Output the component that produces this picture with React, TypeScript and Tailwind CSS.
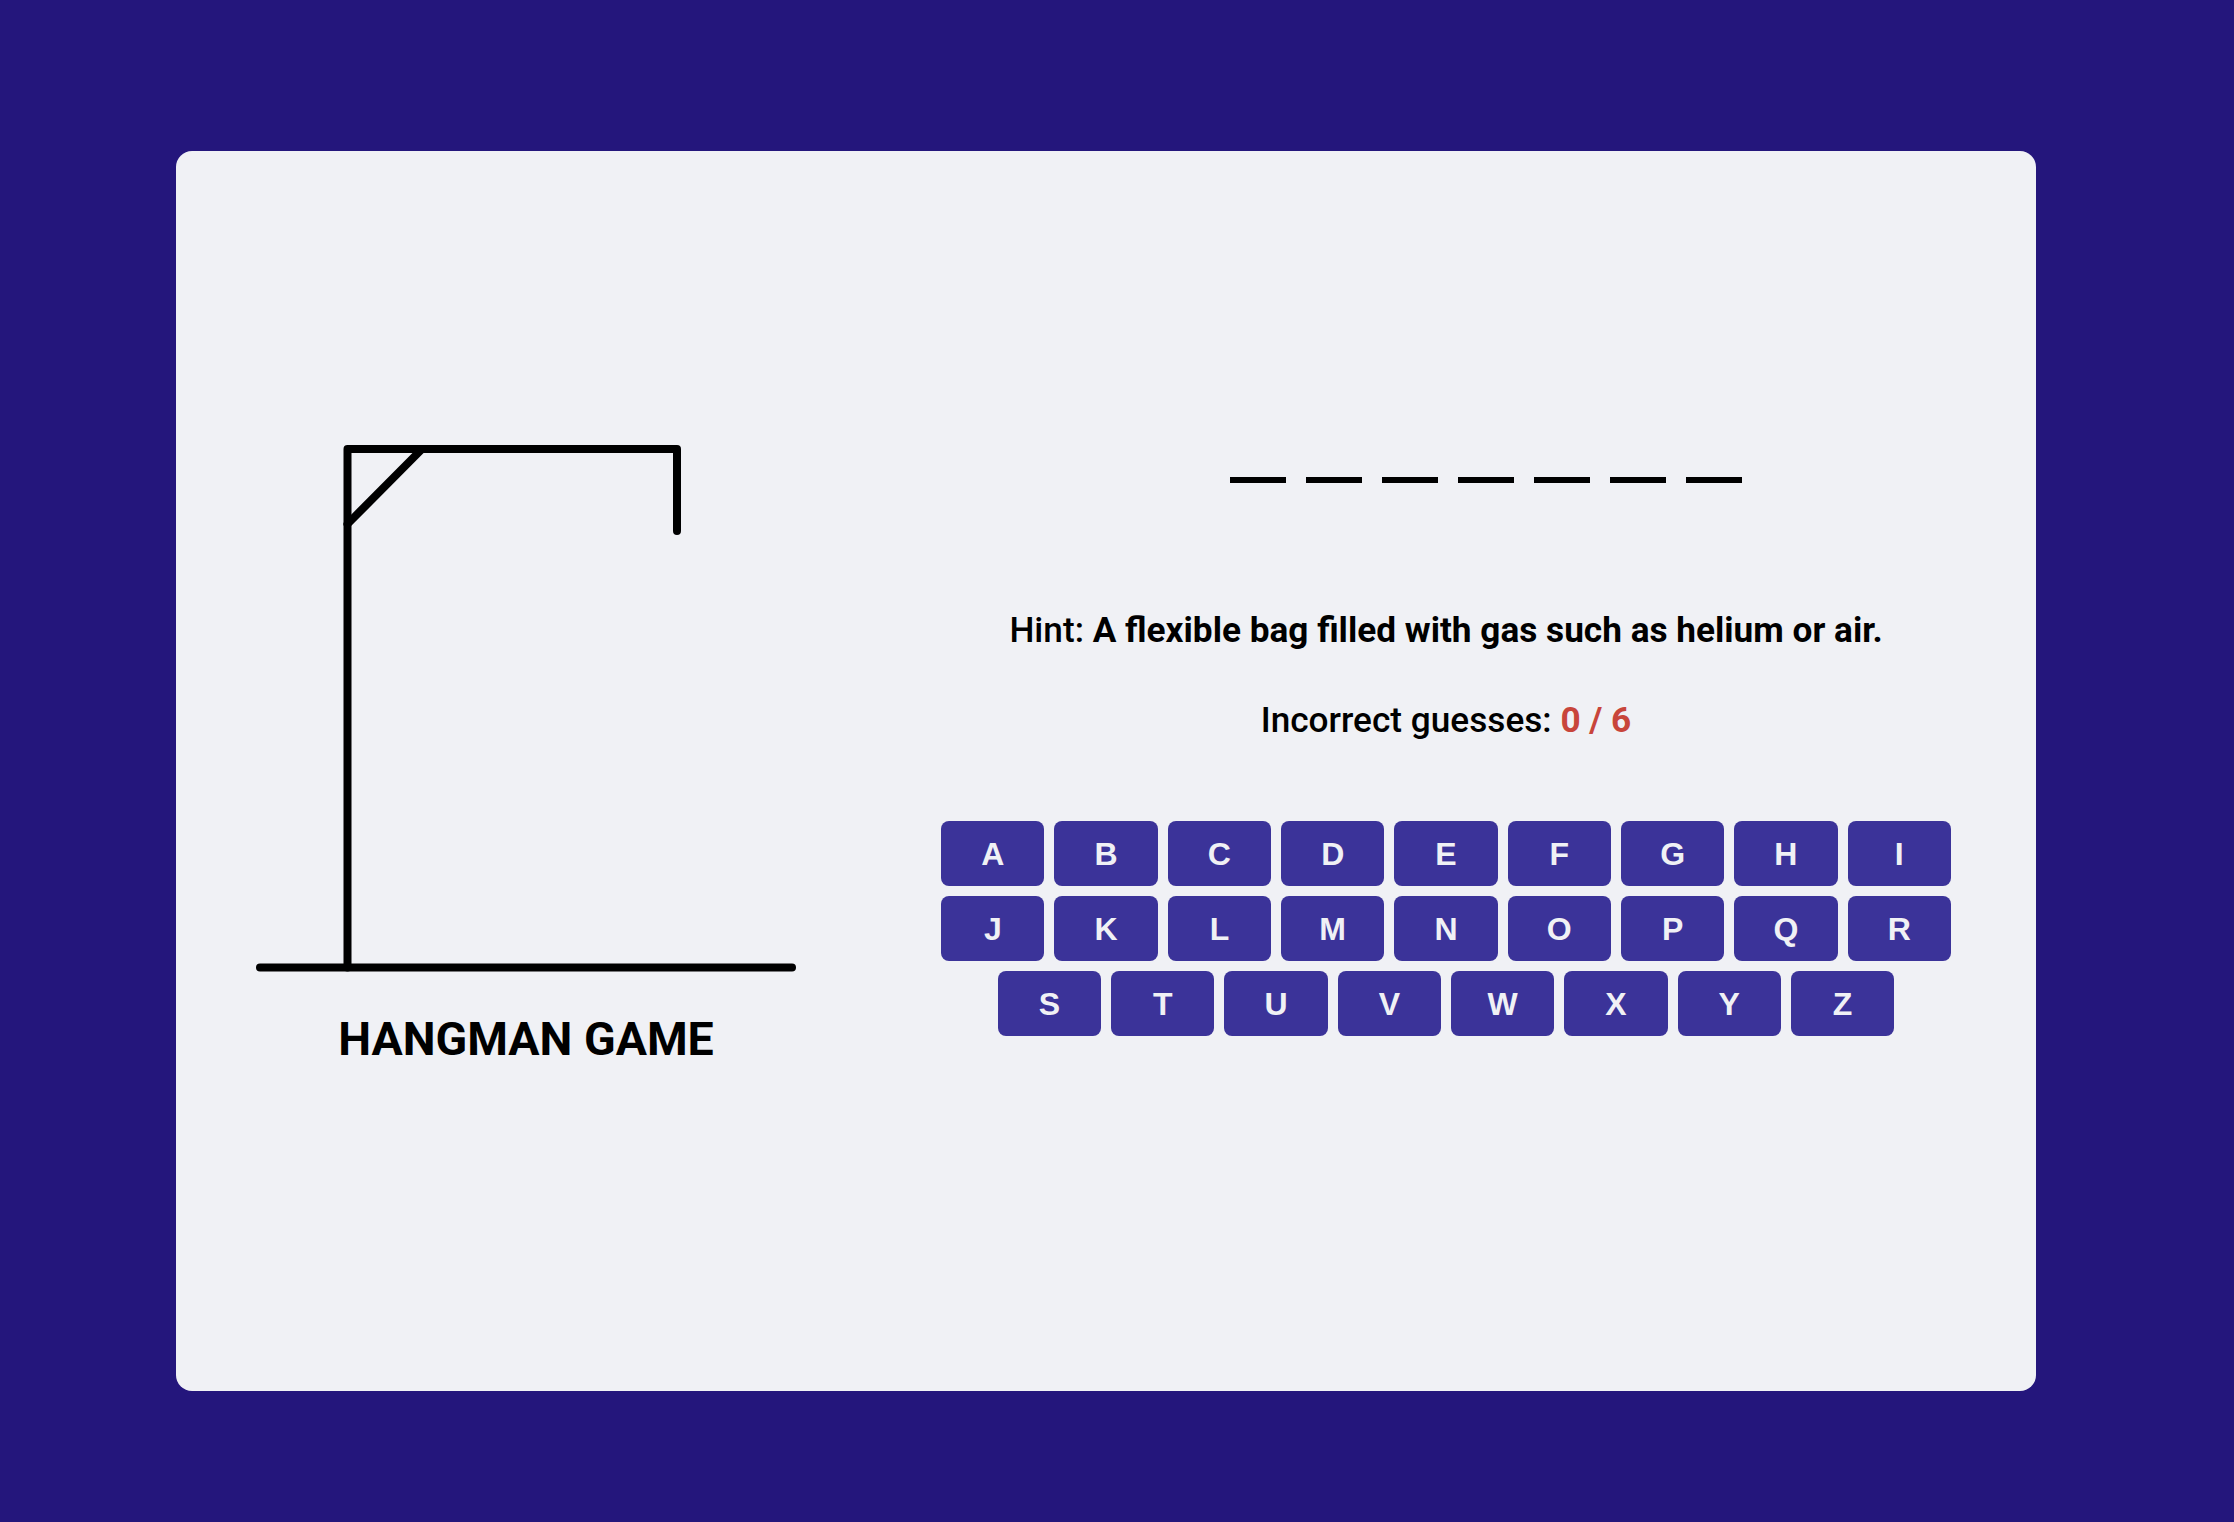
import React from "react";

const LETTERS_ROWS = [
  ["A", "B", "C", "D", "E", "F", "G", "H", "I"],
  ["J", "K", "L", "M", "N", "O", "P", "Q", "R"],
  ["S", "T", "U", "V", "W", "X", "Y", "Z"],
];

function Gallows() {
  return (
    <svg width="540" height="527" viewBox="0 0 540 527" className="block">
      <g stroke="#000" strokeWidth="8" strokeLinecap="round" strokeLinejoin="round" fill="none">
        <polyline points="91.5,522.5 91.5,4 421,4 421,86" />
        <line x1="91.5" y1="79" x2="166" y2="4" />
        <line x1="4" y1="522.5" x2="536" y2="522.5" />
      </g>
    </svg>
  );
}

export default function App() {
  const letters = LETTERS_ROWS.flat();
  return (
    <div className="min-h-screen w-full bg-[#24167c] pl-[176px] pt-[151px] pb-[131px] font-['Roboto',sans-serif]">
      <div className="flex w-[1860px] h-[1240px] items-start gap-[140px] rounded-2xl bg-[#f0f1f5] px-[80px]">
        <div className="mt-[294px] flex w-[540px] flex-col items-center">
          <Gallows />
          <h1 className="mt-[44px] text-[46.5px] leading-[46px] font-bold text-black uppercase">
            Hangman Game
          </h1>
        </div>
        <div className="mt-[326px] flex w-[1020px] flex-col">
          <ul className="flex justify-center gap-[20px] pl-[80px]">
            {Array.from({ length: 7 }).map((_, i) => (
              <li key={i} className="h-[6px] w-[56px] bg-black" />
            ))}
          </ul>
          <h4 className="mt-[130px] text-center text-[35.2px] leading-[35px] font-medium text-black">
            Hint: <b className="font-bold">A flexible bag filled with gas such as helium or air.</b>
          </h4>
          <h4 className="mt-[55px] text-center text-[35.2px] leading-[35px] font-medium text-black">
            Incorrect guesses: <b className="font-bold text-[#c8453b]">0 / 6</b>
          </h4>
          <div className="mt-[83px] flex flex-wrap justify-center gap-[10px]">
            {letters.map((l) => (
              <button
                key={l}
                className="flex h-[65px] w-[103.3px] items-center justify-center rounded-lg bg-[#3b3399] font-['Liberation_Sans',Arial,sans-serif] text-[32px] font-bold text-[#f0f1f5]"
              >
                {l}
              </button>
            ))}
          </div>
        </div>
      </div>
    </div>
  );
}
